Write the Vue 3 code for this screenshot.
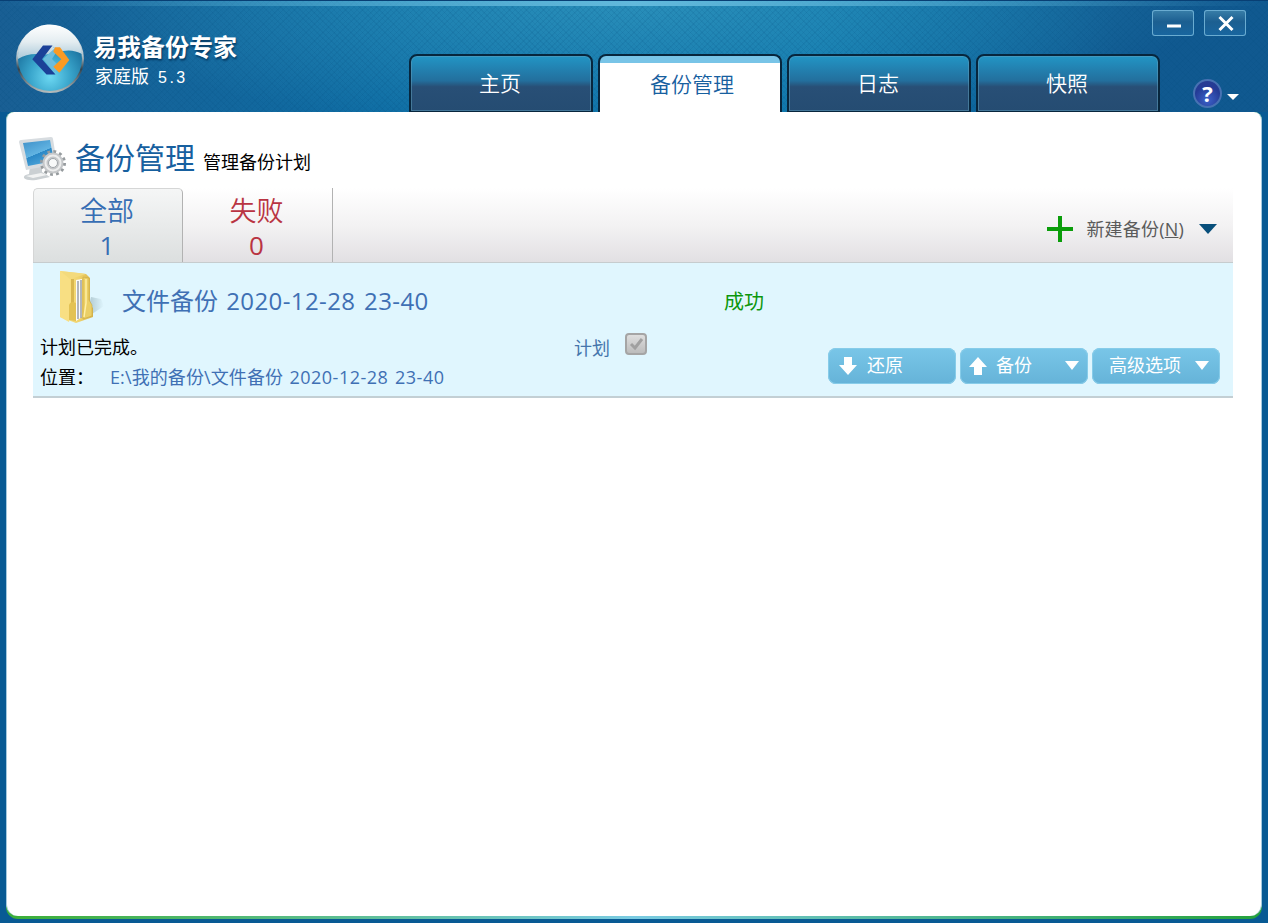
<script setup>
import { ref } from 'vue'

const activeTab = ref('backup')
const tabs = [
  { id: 'home', label: '主页' },
  { id: 'backup', label: '备份管理' },
  { id: 'log', label: '日志' },
  { id: 'snapshot', label: '快照' },
]

const activeFilter = ref('all')
const filters = [
  { id: 'all', label: '全部', count: 1 },
  { id: 'failed', label: '失败', count: 0 },
]
</script>

<template>
  <div class="window">
    <header class="header">
      <div class="brand">
        <svg class="brand__logo" width="70" height="70" viewBox="0 0 70 70">
          <defs>
            <linearGradient id="rim" x1="0" y1="0" x2="0" y2="1">
              <stop offset="0" stop-color="#f4f8fa" />
              <stop offset=".45" stop-color="#b4c4cc" />
              <stop offset=".65" stop-color="#33434e" />
              <stop offset="1" stop-color="#b9c0c0" />
            </linearGradient>
            <radialGradient id="ball" cx=".5" cy=".78" r=".62">
              <stop offset="0" stop-color="#6cd8f2" />
              <stop offset=".5" stop-color="#3aa6cc" />
              <stop offset="1" stop-color="#1a719e" />
            </radialGradient>
            <linearGradient id="gloss" x1="0" y1="0" x2="0" y2="1">
              <stop offset="0" stop-color="#fff" />
              <stop offset=".5" stop-color="#e4edf1" />
              <stop offset="1" stop-color="#a9c8d8" />
            </linearGradient>
          </defs>
          <circle cx="35" cy="35" r="34" fill="url(#rim)" />
          <circle cx="35" cy="35" r="32" fill="url(#ball)" />
          <path d="M3 35A32 32 0 0 1 67 30Q58 25 48 27T29 31Q15 28 3 35Z" fill="url(#gloss)" />
          <path d="M37 22l3 2-12 11 12 14 4-7-7-7 5-8Z" fill="#6cbcdc" />
          <path d="M28 21.500h9.500L27 35.300l13.500 15.200h-9L17.300 35.300Z" fill="#1b4198" />
          <path d="M40 23.300h5L54.300 36l-10 12.700-6-6 8-7.400-8-7.600Z" fill="#fb9a22" />
        </svg>
        <div class="brand__text">
          <div class="brand__name">易我备份专家</div>
          <div class="brand__edition">家庭版<span class="brand__version">5.3</span></div>
        </div>
      </div>
      <nav class="tabs">
        <button
          v-for="tab in tabs"
          :key="tab.id"
          class="tab"
          :class="{ 'tab--active': tab.id === activeTab }"
          @click="activeTab = tab.id"
        >{{ tab.label }}</button>
      </nav>
      <div class="controls">
        <div class="controls__window">
          <button class="winbtn">
            <svg width="42" height="26" viewBox="0 0 42 26"><path d="M15 16h14" stroke="#fff" stroke-width="3" /></svg>
          </button>
          <button class="winbtn">
            <svg width="42" height="26" viewBox="0 0 42 26"><path d="M15.500 7l13 13M28.500 7l-13 13" stroke="#fff" stroke-width="3" /></svg>
          </button>
        </div>
        <div class="help">
          <span class="help__icon">?</span>
          <svg width="14" height="8" viewBox="0 0 14 8"><path d="M1 2h12L7 8Z" fill="#fff" /></svg>
        </div>
      </div>
    </header>

    <div class="frame">
      <main class="content">
        <div class="title">
          <svg width="50" height="48" viewBox="0 0 50 48">
            <defs>
              <linearGradient id="screen" x1="0" y1="0" x2=".5" y2="1">
                <stop offset="0" stop-color="#3d8fc8" />
                <stop offset=".6" stop-color="#62b4e2" />
                <stop offset=".61" stop-color="#2b88c6" />
                <stop offset="1" stop-color="#4aa3d8" />
              </linearGradient>
            </defs>
            <path d="M11 31l-1 8q-6 1-5 4 3 3 12 2l14-3-8-5v-8Z" fill="#cbd0d3" />
            <path d="M7 41l15-3 6 2-14 3Z" fill="#f2f3f3" />
            <path d="M0 7q0-2 2-2l30-3q2 0 2 2l4 25-31 6Z" fill="#d7dce0" />
            <path d="M4 8l27-3 4 21-26 5Z" fill="url(#screen)" />
            <circle cx="34" cy="28" r="11" fill="none" stroke="#969b9e" stroke-width="4" stroke-dasharray="2.700 3.060" />
            <circle cx="34" cy="28" r="7.500" fill="none" stroke="#c5c7c9" stroke-width="6" />
            <circle cx="34" cy="28" r="7.500" fill="none" stroke="#eceded" stroke-width="2" />
            <circle cx="34" cy="28" r="4.500" fill="#f8f9f9" stroke="#9fa4a8" />
          </svg>
          <h1 class="title__main">备份管理</h1>
          <span class="title__sub">管理备份计划</span>
        </div>

        <div class="toolbar">
          <button
            v-for="filter in filters"
            :key="filter.id"
            class="filter"
            :class="['filter--' + filter.id, { 'filter--active': filter.id === activeFilter }]"
            @click="activeFilter = filter.id"
          >
            <span>{{ filter.label }}</span>
            <span class="filter__count">{{ filter.count }}</span>
          </button>
          <button class="create">
            <svg width="26" height="26" viewBox="0 0 26 26"><path d="M0 13h26M13 0v26" stroke="#0a9d0a" stroke-width="4" /></svg>
            <span class="create__label">新建备份(<u>N</u>)</span>
            <svg width="18" height="10" viewBox="0 0 18 10"><path d="M0 0h18L9 10Z" fill="#084f7b" /></svg>
          </button>
        </div>

        <section class="plan">
          <div class="plan__info">
            <div class="plan__head">
              <svg width="48" height="54" viewBox="0 0 48 54">
                <defs>
                  <linearGradient id="folder" x1="0" y1="0" x2="1" y2="0">
                    <stop offset="0" stop-color="#ffe991" />
                    <stop offset=".6" stop-color="#eed16a" />
                    <stop offset="1" stop-color="#d8b44a" />
                  </linearGradient>
                  <linearGradient id="shade" x1="0" y1="0" x2="1" y2="0">
                    <stop offset="0" stop-color="#8eaab2" />
                    <stop offset="1" stop-color="#8eaab2" stop-opacity="0" />
                  </linearGradient>
                </defs>
                <path d="M28 48l18-12-3-7-10-2Z" fill="url(#shade)" opacity=".7" />
                <path d="M2 1l26 3 4 4v27l3 3v9l-17 6L2 47Z" fill="url(#folder)" />
                <path d="M2 1l10 8 1 22-2 21-9-5Z" fill="#f8df83" />
                <path d="M12 9l16-5-7-1L2 1Z" fill="#f3da7c" />
                <path d="M13 9h3v41h-3Z" fill="#d9b750" />
                <path d="M18 10l6-1v38l-6 4Z" fill="#fbfbfb" />
                <path d="M20 11v38M23 10v38" stroke="#9ba0a8" stroke-width="1.500" />
                <path d="M25 7l6 1v22l3 5v11l-9 3Z" fill="#ebcf66" stroke="#c9a743" stroke-width=".6" />
                <path d="M11 35q1-3 4-3l3 1v18l-7-1Z" fill="#e3c254" />
                <path d="M28 9v24l-2 14" fill="none" stroke="#fff0a5" stroke-width="1.500" />
              </svg>
              <span class="plan__name">文件备份 <span class="plan__date">2020-12-28 23-40</span></span>
            </div>
            <div class="plan__status">计划已完成。</div>
            <div class="plan__path">
              <span class="plan__label">位置：</span>
              <a>E:\我的备份\文件备份 <span class="plan__date">2020-12-28 23-40</span></a>
            </div>
          </div>
          <div class="plan__schedule">
            <span>计划</span>
            <span class="check">
              <svg width="18" height="18" viewBox="0 0 18 18"><path d="M4 9l4 4 7-9" fill="none" stroke="#a0a0a0" stroke-width="3" /></svg>
            </span>
          </div>
          <div class="plan__result">成功</div>
          <div class="actions">
            <button class="action">
              <svg width="18" height="18" viewBox="0 0 18 18"><path d="M5 0h8v8h5l-9 10L0 8h5Z" fill="#fff" /></svg>
              <span>还原</span>
            </button>
            <button class="action action--backup">
              <svg width="18" height="18" viewBox="0 0 18 18"><path d="M5 18h8v-8h5L9 0 0 10h5Z" fill="#fff" /></svg>
              <span>备份</span>
              <svg class="action__arrow" width="14" height="9" viewBox="0 0 14 9"><path d="M0 0h14L7 9Z" fill="#fff" /></svg>
            </button>
            <button class="action action--more">
              <span>高级选项</span>
              <svg class="action__arrow" width="14" height="9" viewBox="0 0 14 9"><path d="M0 0h14L7 9Z" fill="#fff" /></svg>
            </button>
          </div>
        </section>
      </main>
    </div>
  </div>
</template>

<style>
body {
  margin: 0;
  overflow: hidden;
}
</style>

<style scoped>
* {
  box-sizing: border-box;
}

button {
  background: none;
  border: 0;
  color: inherit;
  font: inherit;
  margin: 0;
  padding: 0;
}

svg {
  display: block;
  flex: none;
}

.window {
  background: #085a94;
  display: flex;
  flex-direction: column;
  font-family: "Open Sans", "Noto Sans CJK SC", sans-serif;
  font-size: 18px;
  height: 923px;
  padding: 0 6px 4px 6px;
  width: 1268px;
}

.header {
  background:
    linear-gradient(#083f74 0 1px, transparent 1px),
    linear-gradient(90deg, transparent, #62b9dc 50%, transparent) 0 1px / 100% 5px no-repeat,
    repeating-linear-gradient(45deg, #034b7d1c 0 1px, transparent 1px 4px),
    repeating-linear-gradient(-45deg, #034b7d1c 0 1px, transparent 1px 4px),
    radial-gradient(ellipse 45% 120% at 50% 0, #2a8fba, #2389b600),
    linear-gradient(90deg, #195f94, #0e6ca3 30%, #0c75ab 65%, #105990 88%);
  display: flex;
  flex: none;
  height: 112px;
  margin: 0 -6px;
  padding-left: 15px;
}

.brand {
  display: flex;
  flex: none;
  padding-top: 24px;
  width: 394px;
}

.brand__text {
  color: #fff;
  padding: 6px 0 0 8px;
}

.brand__name {
  font-size: 24px;
  font-weight: bold;
  line-height: 34px;
  text-shadow: 1px 2px 2px #063c66;
}

.brand__edition {
  line-height: 24px;
  padding-left: 2px;
}

.brand__version {
  font-family: "Liberation Sans", sans-serif;
  font-size: 16px;
  letter-spacing: 2.500px;
  margin-left: 9px;
}

.tabs {
  display: flex;
  flex: none;
  gap: 5px;
  padding-top: 54px;
}

.tab {
  background: linear-gradient(#2295c5, #236f9d 45%, #284f76 56%, #254c72);
  border: 2px solid #07263d;
  border-bottom-width: 1px;
  border-radius: 8px 8px 0 0;
  box-shadow: inset 0 0 0 1px #609dbc88;
  color: #fff;
  font-size: 21px;
  font-weight: 350;
  height: 58px;
  line-height: 55px;
  padding-right: 2px;
  width: 184px;
}

.tab--active {
  background: linear-gradient(#78c4e7 0 7px, #fff 7px);
  border-bottom: 0;
  box-shadow: none;
  color: #17609f;
  padding: 0 0 0 4px;
}

.controls {
  flex: 1;
  margin-left: -12px;
  padding: 10px 22px 0 0;
}

.controls__window {
  display: flex;
  gap: 10px;
  justify-content: flex-end;
}

.winbtn {
  background: linear-gradient(#397fa9, #1c5f91 45%, #1866a0);
  border-radius: 3px;
  box-shadow: inset 0 0 0 1px #6aacd1;
  flex: none;
  height: 26px;
  width: 42px;
}

.help {
  align-items: center;
  display: flex;
  gap: 4px;
  justify-content: flex-end;
  margin-top: 43px;
  padding-right: 6px;
}

.help svg {
  margin-top: 4px;
}

.help__icon {
  background: radial-gradient(circle at 50% 75%, #3d62c9, #243b96 60%, #293d91);
  border: 2px solid #4772b3;
  border-radius: 50%;
  color: #fff;
  font-size: 22px;
  font-weight: bold;
  height: 29px;
  line-height: 25px;
  text-align: center;
  width: 29px;
}

/* the thin rim at the bottom fades from green to light blue and back */
.frame {
  background: linear-gradient(90deg, #3bae36, #7acbe2 50%, #25a23c);
  border-radius: 8px 8px 12px 12px;
  flex: 1;
  padding-bottom: 3px;
}

.content {
  background: #fff;
  border: solid #a5c9df;
  border-radius: 8px 8px 12px 12px;
  border-width: 0 1px;
  height: 100%;
  padding: 23px 28px 0 26px;
}

.title {
  align-items: flex-start;
  display: flex;
  height: 53px;
  margin-left: -13px;
}

.title__main {
  color: #17609f;
  font-size: 30px;
  font-weight: 400;
  line-height: 46px;
  margin: 0 8px 0 6px;
}

.title svg {
  margin: 0 0 0 -1px;
}

.title__sub {
  line-height: 54px;
}

.toolbar {
  background: linear-gradient(#fff, #f3f2f3 50%, #e2e0e3);
  border-bottom: 1px solid #c6ccce;
  display: flex;
  height: 75px;
}

.filter {
  border-right: 1px solid #b2b2b2;
  color: #b93442;
  display: flex;
  flex-direction: column;
  font-size: 27px;
  font-weight: 350;
  line-height: 35px;
  padding: 5px 2px 0 0;
  text-align: center;
  width: 150px;
}

.filter > span {
  display: block;
  width: 100%;
}

.filter__count {
  font-size: 26px;
  font-weight: 400;
}

.filter--all {
  color: #376eb4;
}

.filter--active {
  background: linear-gradient(#f5f6f6, #dcdfdf);
  border-left: 1px solid #d5d6d6;
  border-radius: 5px 5px 0 0;
  border-top: 1px solid #d5d6d6;
  padding: 4px 2px 0 0;
}

.create {
  align-items: center;
  color: #5b5b5b;
  display: flex;
  margin-left: auto;
  padding: 8px 16px 0 0;
}

.create__label {
  letter-spacing: 0.2px;
  margin: -2px 15px 0 13px;
}

.plan {
  background: #e0f6fe;
  border-bottom: 2px solid #c3cfd4;
  display: flex;
  height: 135px;
}

.plan__info {
  padding: 7px 0 0 7px;
  width: 541px;
}

.plan__head {
  display: flex;
  height: 62px;
  padding-left: 18px;
}

.plan__name {
  color: #3f70b4;
  font-size: 24px;
  line-height: 62px;
  margin-left: 16px;
  white-space: nowrap;
  word-spacing: 2px;
}

.plan__date {
  letter-spacing: 0.4px;
}

.plan__status {
  line-height: 30px;
}

.plan__path {
  display: flex;
  line-height: 30px;
}

.plan__path a {
  color: #3f70b4;
  letter-spacing: 0.1px;
  white-space: nowrap;
  word-spacing: 1.500px;
}

.plan__path .plan__date {
  letter-spacing: 0.500px;
}

.plan__label {
  width: 70px;
}

.plan__schedule {
  color: #4675ac;
  display: flex;
  gap: 15px;
  padding-top: 70px;
  width: 150px;
}

.plan__schedule > span:first-child {
  padding-top: 1px;
}

.check {
  background: linear-gradient(#dedede, #bcbcbc);
  border: 2px solid #a5a5a5;
  border-radius: 4px;
  height: 22px;
  width: 22px;
}

.plan__result {
  color: #0c970c;
  font-size: 20px;
  line-height: 78px;
  width: 104px;
}

.actions {
  display: flex;
  gap: 4px;
  padding-top: 85px;
}

.action {
  align-items: center;
  background: linear-gradient(#79c6e8, #65b3d8);
  border-radius: 8px;
  box-shadow: inset 0 0 0 1px #87cce9;
  color: #fff;
  display: flex;
  gap: 10px;
  height: 36px;
  padding: 0 9px 0 11px;
  width: 128px;
}

.action span {
  margin-top: -4px;
}

.action--backup {
  gap: 9px;
  padding-left: 9px;
}

.action--more {
  padding: 0 11px 0 17px;
}

.action__arrow {
  margin: -1px 0 0 auto;
}
</style>
